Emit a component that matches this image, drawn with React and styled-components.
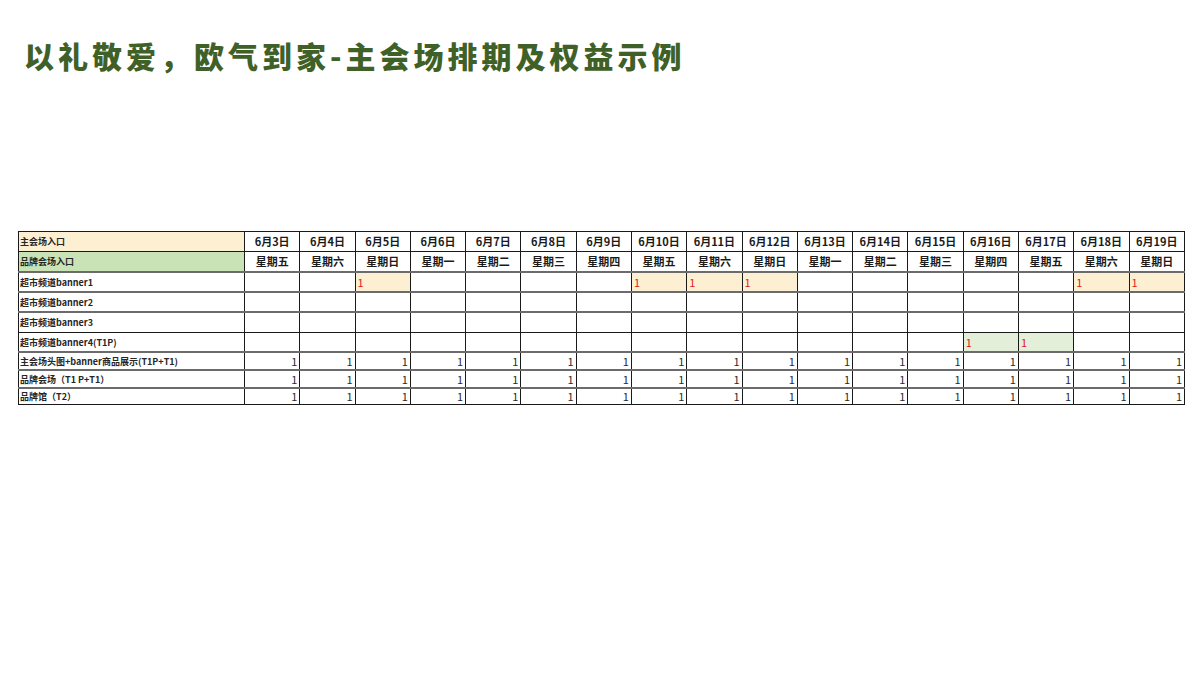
import { createGlobalStyle } from 'styled-components';
import styled from 'styled-components';

const GlobalStyle = createGlobalStyle`
  html, body {
    margin: 0;
    padding: 0;
    background: #ffffff;
  }
  body {
    font-family: "Noto Sans CJK SC", "Noto Sans", sans-serif;
  }
`;

const Page = styled.div`
  width: 1200px;
  height: 675px;
  box-sizing: border-box;
  padding: 32px 0 0 18px;
  overflow: hidden;
`;

const Title = styled.h1`
  margin: 0 0 0 6px;
  font-family: "Noto Sans CJK SC", sans-serif;
  font-size: 30px;
  font-weight: 900;
  letter-spacing: 4px;
  line-height: 46px;
  color: #3f6128;
`;

const Grid = styled.table`
  margin-top: 153px;
  width: 1167px;
  table-layout: fixed;
  border-collapse: collapse;
  font-family: "Noto Sans CJK SC", sans-serif;
`;

const Cell = styled.td`
  height: ${({ $h }) => $h}px;
  padding: 0 2px;
  border: 1.5px solid #1a1a1a;
  border-bottom-color: ${({ $soft }) => ($soft ? '#6b6b6b' : '#1a1a1a')};
  border-bottom-width: ${({ $soft }) => ($soft ? 2.5 : 1.5)}px;
  background: ${({ $bg }) => $bg || '#ffffff'};
  font-size: 11px;
  font-weight: 700;
  line-height: 1;
  color: #1a1a1a;
  white-space: nowrap;
  overflow: hidden;
  text-align: ${({ $align }) => $align || 'left'};
  vertical-align: middle;
`;

const Label = styled(Cell)`
  font-size: 9px;
  padding-left: 1px;
  color: #262626;
`;

const Mark = styled.span`
  font-size: 11px;
  font-weight: 400;
  color: ${({ $red }) => ($red ? '#e02020' : '#2a2a2a')};
`;

const PEACH = '#fdf0d2';
const GREEN = '#c9e2b6';
const LIGHT_GREEN = '#e3efd9';

const weekdays = ['五', '六', '日', '一', '二', '三', '四'];
const days = Array.from({ length: 17 }, (_, i) => ({
  date: `6月${i + 3}日`,
  week: `星期${weekdays[i % 7]}`,
}));

const rows = [
  { label: '超市频道banner1', h: 18, soft: true, marks: [2, 7, 8, 9, 15, 16], bg: PEACH },
  { label: '超市频道banner2', h: 18, soft: true, marks: [] },
  { label: '超市频道banner3', h: 19, soft: false, marks: [] },
  { label: '超市频道banner4(T1P)', h: 18, soft: true, marks: [13, 14], bg: LIGHT_GREEN },
  { label: '主会场头图+banner商品展示(T1P+T1)', h: 16, soft: true, all: true },
  { label: '品牌会场（T1 P+T1）', h: 16, soft: true, all: true },
  { label: '品牌馆（T2）', h: 15, soft: false, all: true },
];

export default function App() {
  return (
    <>
      <GlobalStyle />
      <Page>
        <Title>以礼敬爱，欧气到家-主会场排期及权益示例</Title>
        <Grid>
          <colgroup>
            <col style={{ width: 226 }} />
            {days.map(d => (
              <col key={d.date} />
            ))}
          </colgroup>
          <tbody>
            <tr>
              <Label $h={19} $bg={PEACH}>主会场入口</Label>
              {days.map(d => (
                <Cell key={d.date} $h={19} $align="center">
                  {d.date}
                </Cell>
              ))}
            </tr>
            <tr>
              <Label $h={19} $bg={GREEN} $soft>品牌会场入口</Label>
              {days.map(d => (
                <Cell key={d.week} $h={19} $align="center" $soft>
                  {d.week}
                </Cell>
              ))}
            </tr>
            {rows.map(row => (
              <tr key={row.label}>
                <Label $h={row.h} $soft={row.soft}>{row.label}</Label>
                {days.map((d, i) => {
                  const marked = row.marks && row.marks.includes(i);
                  return (
                    <Cell
                      key={d.date}
                      $h={row.h}
                      $soft={row.soft}
                      $bg={marked ? row.bg : undefined}
                      $align={row.all ? 'right' : 'left'}
                    >
                      {marked && <Mark $red>1</Mark>}
                      {row.all && <Mark>1</Mark>}
                    </Cell>
                  );
                })}
              </tr>
            ))}
          </tbody>
        </Grid>
      </Page>
    </>
  );
}
